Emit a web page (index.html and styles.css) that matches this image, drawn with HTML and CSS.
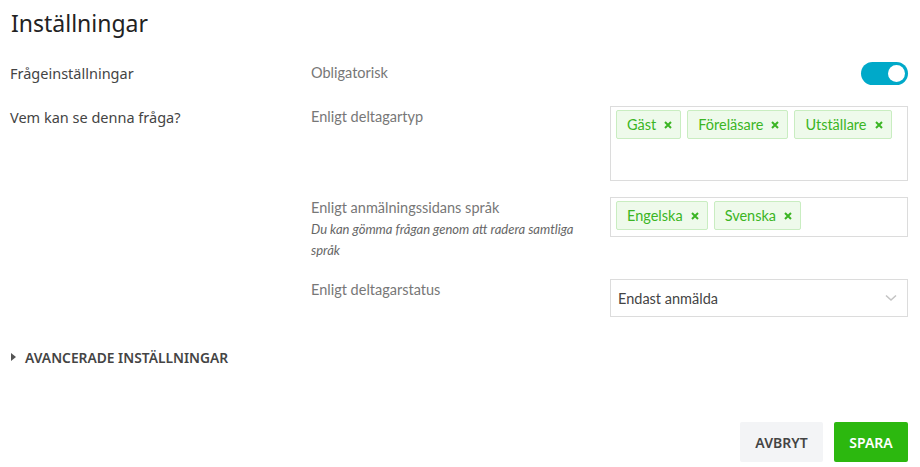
FILE: index.html
```html
<!DOCTYPE html>
<html lang="sv">
<head>
<meta charset="utf-8">
<title>Inställningar</title>
<link rel="stylesheet" href="styles.css">
</head>
<body>
<div class="page">
  <h1 class="title">Inställningar</h1>

  <div class="rows">
    <div class="row row-first">
      <div class="section">Frågeinställningar</div>
      <div class="label">Obligatorisk</div>
      <div class="control control-end">
        <span class="toggle"><span class="knob"></span></span>
      </div>
    </div>

    <div class="row">
      <div class="section">Vem kan se denna fråga?</div>
      <div class="label">Enligt deltagartyp</div>
      <div class="control">
        <div class="tagbox tagbox-tall">
          <span class="tag">Gäst <svg class="x" width="8" height="8" viewBox="0 0 8 8"><path d="M1 1 L7 7 M7 1 L1 7"/></svg></span>
          <span class="tag">Föreläsare <svg class="x" width="8" height="8" viewBox="0 0 8 8"><path d="M1 1 L7 7 M7 1 L1 7"/></svg></span>
          <span class="tag">Utställare <svg class="x" width="8" height="8" viewBox="0 0 8 8"><path d="M1 1 L7 7 M7 1 L1 7"/></svg></span>
        </div>
      </div>
    </div>

    <div class="row row-lang">
      <div class="section"></div>
      <div class="label">Enligt anmälningssidans språk
        <div class="note">Du kan gömma frågan genom att radera samtliga språk</div>
      </div>
      <div class="control">
        <div class="tagbox">
          <span class="tag">Engelska <svg class="x" width="8" height="8" viewBox="0 0 8 8"><path d="M1 1 L7 7 M7 1 L1 7"/></svg></span>
          <span class="tag">Svenska <svg class="x" width="8" height="8" viewBox="0 0 8 8"><path d="M1 1 L7 7 M7 1 L1 7"/></svg></span>
        </div>
      </div>
    </div>

    <div class="row">
      <div class="section"></div>
      <div class="label">Enligt deltagarstatus</div>
      <div class="control">
        <div class="select">
          <span>Endast anmälda</span>
          <svg class="chev" width="12" height="8" viewBox="0 0 12 8"><path d="M1 1.5 L6 6 L11 1.5" fill="none" stroke="#c4c4c4" stroke-width="1.6"/></svg>
        </div>
      </div>
    </div>
  </div>

  <div class="advanced">
    <span class="tri"></span>
    <span>AVANCERADE INSTÄLLNINGAR</span>
  </div>

  <div class="actions">
    <button class="btn btn-cancel">AVBRYT</button>
    <button class="btn btn-save">SPARA</button>
  </div>
</div>
</body>
</html>
```

FILE: styles.css
```css
* { box-sizing: border-box; }
html, body { margin: 0; padding: 0; background: #fff; }
body { width: 920px; height: 467px; overflow: hidden; }

.page {
  padding: 0 12px 0 10px;
  font-family: "Noto Sans", sans-serif;
  color: #444;
}

.title {
  margin: 0;
  padding-top: 7px;
  height: 62px;
  font-family: "Noto Sans", sans-serif;
  font-weight: 400;
  font-size: 23px;
  line-height: 32px;
  color: #222;
  padding-left: 1px;
}

.rows {
  display: flex;
  flex-direction: column;
  gap: 16px;
}

.row {
  display: grid;
  grid-template-columns: 301px 299px 1fr;
  align-items: start;
}
.row-first { padding-bottom: 5px; }
.row-lang { padding-bottom: 2px; }

.section {
  font-size: 14.5px;
  line-height: 22px;
  color: #444;
}

.label {
  font-family: Lato, sans-serif;
  font-size: 14.5px;
  line-height: 22px;
  color: #777;
}

.note {
  font-style: italic;
  font-size: 13px;
  line-height: 21px;
  color: #666;
  padding-right: 6px;
}

.control { display: flex; }
.control-end { justify-content: flex-end; }

.toggle {
  width: 47px;
  height: 23px;
  border-radius: 12px;
  background: #00a9c9;
  display: flex;
  align-items: center;
  justify-content: flex-end;
  padding-right: 3px;
}
.knob {
  width: 17px;
  height: 17px;
  border-radius: 50%;
  background: #fff;
}

.tagbox {
  width: 100%;
  border: 1px solid #dcdcdc;
  padding: 3px 5px 5px;
  display: flex;
  flex-wrap: wrap;
  align-content: flex-start;
  gap: 6px;
  min-height: 40px;
}
.tagbox-tall { height: 75px; }

.tag {
  display: inline-flex;
  align-items: center;
  height: 29px;
  padding: 0 8px 0 10px;
  background: #eefaeb;
  border: 1px solid #c9edc1;
  border-radius: 2px;
  font-family: Lato, sans-serif;
  font-size: 14.5px;
  color: #3bb524;
  white-space: nowrap;
}
.x {
  margin-left: 8px;
  fill: none;
  stroke: #3bb524;
  stroke-width: 2;
}

.select {
  width: 100%;
  height: 38px;
  border: 1px solid #dcdcdc;
  display: flex;
  align-items: center;
  justify-content: space-between;
  padding: 0 10px 0 7px;
  font-family: Lato, sans-serif;
  font-size: 14.5px;
  color: #444;
}

.advanced {
  margin-top: 29px;
  display: flex;
  align-items: center;
  gap: 9px;
  height: 22px;
  font-size: 13.8px;
  font-weight: 600;
  color: #444;
  padding-left: 1px;
}
.tri {
  width: 0; height: 0;
  border-top: 4px solid transparent;
  border-bottom: 4px solid transparent;
  border-left: 5px solid #555;
}

.actions {
  margin-top: 54px;
  display: flex;
  justify-content: flex-end;
  gap: 11px;
}
.btn {
  height: 40px;
  border: none;
  border-radius: 2px;
  font-family: "Noto Sans", sans-serif;
  font-size: 14px;
  font-weight: 600;
  padding: 0;
}
.btn-cancel { width: 83px; background: #f3f4f6; color: #444; }
.btn-save { width: 74px; background: #2cb80f; color: #fff; }
```
